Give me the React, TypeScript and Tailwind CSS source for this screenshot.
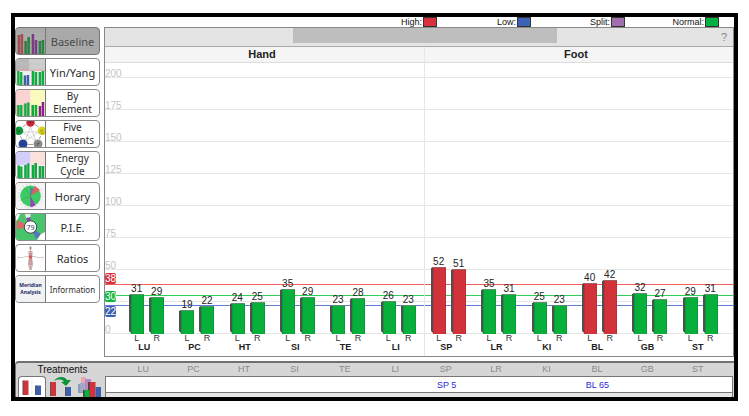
import type { ReactNode } from "react";

const GREEN = "#06b03a";
const RED = "#d2333b";
const BLUE = "#3c5fae";

const PX_PER_UNIT = 1.28;

const legend = [
  { label: "High:", swatch: "bg-[#d8303c]" },
  { label: "Low:", swatch: "bg-[#3d62b5]" },
  { label: "Split:", swatch: "bg-[#a070ae]" },
  { label: "Normal:", swatch: "bg-[#00b140]" },
];

const ticks = [175, 150, 125, 100, 75, 50, 25, 0];

const meridians = [
  { id: "LU", left: 31, right: 29, point: "" },
  { id: "PC", left: 19, right: 22, point: "" },
  { id: "HT", left: 24, right: 25, point: "" },
  { id: "SI", left: 35, right: 29, point: "" },
  { id: "TE", left: 23, right: 28, point: "" },
  { id: "LI", left: 26, right: 23, point: "" },
  { id: "SP", left: 52, right: 51, point: "SP 5" },
  { id: "LR", left: 35, right: 31, point: "" },
  { id: "KI", left: 25, right: 23, point: "" },
  { id: "BL", left: 40, right: 42, point: "BL 65" },
  { id: "GB", left: 32, right: 27, point: "" },
  { id: "ST", left: 29, right: 31, point: "" },
];

const thresholds = [
  { value: 38, line: "bg-[#f45c5c]", badge: "bg-[#d8303c] bottom-full" },
  { value: 30, line: "bg-[#2fd058]", badge: "bg-[#0cb83c] -top-1" },
  { value: 22, line: "bg-[#5f7cd8]", badge: "bg-[#3c5fb0] top-full" },
];

type MiniBar = [x: number, top: number, color: string];

function MiniChart({ bars, children }: { bars: MiniBar[]; children?: ReactNode }) {
  return (
    <svg viewBox="0 0 29 26" className="h-full w-full" preserveAspectRatio="none">
      {children}
      {bars.map(([x, top, color]) => (
        <g key={x}>
          <rect x={x - 0.5} y={top} width="0.8" height={26 - top} fill="#555" opacity="0.6" />
          <rect x={x} y={top} width="2.2" height={26 - top} fill={color} />
        </g>
      ))}
    </svg>
  );
}

function BaselineIcon() {
  return (
    <MiniChart
      bars={[
        [2, 7, "#a84a4e"], [5, 6, "#a84a4e"], [8.7, 13, "#25873f"], [11.7, 9, "#25873f"],
        [16, 6, "#7c3b88"], [19, 12, "#7c3b88"], [23, 13, "#25873f"], [26, 12, "#25873f"],
      ]}
    >
      <rect width="29" height="26" fill="#a9a9a9" />
      <path d="M0 6H29M0 10H29M0 18H29M0 22H29" stroke="#b8b8b8" strokeWidth="0.6" />
      <path d="M0 14H29" stroke="#b98d8d" strokeWidth="0.6" />
    </MiniChart>
  );
}

function YinYangIcon() {
  return (
    <MiniChart
      bars={[
        [1.3, 12, GREEN], [4.2, 13, GREEN], [8, 16.5, BLUE], [11, 16, BLUE],
        [16, 12, GREEN], [19, 13, GREEN], [23, 13, GREEN], [26, 12, GREEN],
      ]}
    >
      <rect width="13" height="12" fill="#b8b8b8" />
      <rect x="13" width="16" height="12" fill="#cdcdcd" />
      <rect y="12" width="29" height="14" fill="#f0f0f0" />
      <path d="M0 11H29" stroke="#e8a0a0" strokeWidth="0.8" />
      <path d="M0 5H29" stroke="#c4c4c4" strokeWidth="0.6" />
    </MiniChart>
  );
}

function ElementIcon() {
  return (
    <MiniChart
      bars={[
        [1.3, 15, GREEN], [4.2, 15, GREEN], [8.3, 13.5, GREEN], [11.3, 12.5, GREEN],
        [15.8, 15, GREEN], [19, 15, GREEN], [23, 16, "#8e1a9c"], [26, 12, "#8e1a9c"],
      ]}
    >
      <rect width="14.5" height="26" fill="#fbd3d3" />
      <rect x="14.5" width="14.5" height="26" fill="#fafabc" />
    </MiniChart>
  );
}

function EnergyIcon() {
  return (
    <MiniChart
      bars={[
        [1.8, 13.5, GREEN], [4.3, 14.5, GREEN], [8.5, 13, GREEN], [11.3, 11.5, GREEN],
        [16, 13, GREEN], [18.8, 11, GREEN], [23, 14, GREEN], [26, 14, GREEN],
      ]}
    >
      <rect width="14.5" height="13" fill="#d3cffa" />
      <rect x="14.5" width="14.5" height="13" fill="#fbe0dc" />
      <rect y="13" width="29" height="13" fill="#f4f4f4" />
    </MiniChart>
  );
}

function FiveElementsIcon() {
  return (
    <svg viewBox="0 0 29 26" className="h-full w-full">
      <g fill="none" stroke="#bdbdbd" strokeWidth="0.6">
        <path d="M14.5 6L9 20L23 11H6L20 20Z" />
        <path d="M10.5 3L6.5 6M18.5 3L22.5 6M4.5 15L5.5 18M24.5 15L23.5 18M12 23.5H17" stroke="#666" />
      </g>
      <circle cx="14.5" cy="1.6" r="4.2" fill="#cf2435" />
      <circle cx="3" cy="9.8" r="4.3" fill="#0d9a3a" />
      <circle cx="26" cy="9.8" r="4.3" fill="#d9d31c" />
      <circle cx="7" cy="23" r="4.5" fill="#27479c" />
      <circle cx="22" cy="23" r="4.5" fill="#8d8d8d" />
      <path d="M12 1H17M14.5 0V3M1 9L4 11M2 12L4 9M24 10L27 9M25 12H28M5 22L9 24M20 23L24 22M21 25L23 21" stroke="#222" strokeWidth="0.6" opacity="0.6" />
    </svg>
  );
}

function HoraryIcon() {
  return (
    <svg viewBox="0 0 29 26" className="h-full w-full">
      <rect width="29" height="26" fill="#f4f4f4" />
      <circle cx="14.5" cy="13" r="12" fill="none" stroke="#bbb" strokeWidth="0.8" strokeDasharray="1 3" />
      <circle cx="14.5" cy="13" r="10.4" fill="#3fca68" />
      <path d="M14.5 13V4.5L18.5 6Z" fill="#5a78c4" />
      <path d="M14.5 13L19 3L24 7Z" fill="#e0605f" />
      <path d="M14.5 13V24.5L19.5 22.5Z" fill="#a23cc0" />
      <path d="M14.5 3V23M9 4.5L14.5 13L5 17" stroke="#2a9a4a" strokeWidth="0.4" fill="none" />
    </svg>
  );
}

function PieIcon() {
  return (
    <svg viewBox="0 0 29 26" className="h-full w-full" preserveAspectRatio="xMidYMid slice">
      <rect width="29" height="26" fill="#48c46c" />
      <path d="M0 0H4L2 5L0 7Z" fill="#fff" />
      <path d="M14.5 13L1.5 6L0.5 15Z" fill="#e0656a" />
      <path d="M14.5 13L10 4L14.5 3Z" fill="#9a3bb5" />
      <path d="M10 4L9 0H14.5V3Z" fill="#e4f4e8" />
      <path d="M14.5 13L25 20L20 25Z" fill="#5874c0" />
      <path d="M25 20L29 18V26H21Z" fill="#fff" />
      <circle cx="14.5" cy="13" r="6.2" fill="#fff" stroke="#333" strokeWidth="0.9" />
      <text x="14.5" y="15.6" textAnchor="middle" fontSize="7" fill="#333a6a" fontFamily="Noto Sans, sans-serif">79</text>
    </svg>
  );
}

function RatiosIcon() {
  return (
    <svg viewBox="0 0 29 26" className="h-full w-full" fill="none">
      <path d="M2 12.5H7L10 11.5H19L22 12.5H27" stroke="#c9bbbb" strokeWidth="0.8" />
      <path d="M2 11V15M27 11V15" stroke="#ccc" strokeWidth="0.6" />
      <ellipse cx="14.5" cy="3" rx="1.2" ry="1.7" fill="#b9a3a0" />
      <path d="M12.8 6.5H16.2L15.8 14L16.6 19L15.3 24.5H13.7L12.4 19L13.2 14Z" fill="#e9d2ce" stroke="#a08a88" strokeWidth="0.6" />
      <path d="M14.5 2V24M13.5 8V20M15.5 8V20" stroke="#b06a68" strokeWidth="0.5" />
      <circle cx="14.5" cy="12" r="1.4" fill="#e04848" />
    </svg>
  );
}

function InformationIcon() {
  return (
    <span className="flex h-full flex-col justify-center bg-[#f1f2f4] text-center text-[5px] leading-[7px] font-bold text-[#1c2a66]">
      <span>Meridian</span>
      <span>Analysis</span>
    </span>
  );
}

const views = [
  { lines: ["Baseline"], icon: <BaselineIcon />, size: "text-[11px]", active: true },
  { lines: ["Yin/Yang"], icon: <YinYangIcon />, size: "text-[11px]" },
  { lines: ["By", "Element"], icon: <ElementIcon />, size: "text-[10px]" },
  { lines: ["Five", "Elements"], icon: <FiveElementsIcon />, size: "text-[10px]" },
  { lines: ["Energy", "Cycle"], icon: <EnergyIcon />, size: "text-[10px]" },
  { lines: ["Horary"], icon: <HoraryIcon />, size: "text-[11px]" },
  { lines: ["P.I.E."], icon: <PieIcon />, size: "text-[11px]" },
  { lines: ["Ratios"], icon: <RatiosIcon />, size: "text-[11px]" },
  { lines: ["Information"], icon: <InformationIcon />, size: "text-[8px]" },
];

function Sidebar() {
  return (
    <nav className="flex w-[85px] shrink-0 flex-col gap-[3px] font-['Noto_Sans',sans-serif]">
      {views.map((view) => (
        <button
          key={view.lines[0]}
          type="button"
          className={`flex h-7 overflow-hidden rounded border ${
            view.active ? "border-[#777] bg-[#a9a9a9] text-[#4a4a4a]" : "border-[#8a8a8a] bg-white text-[#2c2c2c]"
          }`}
        >
          <span className="block h-full w-[30px] shrink-0 border-r border-[#777]">{view.icon}</span>
          <span className={`flex h-full flex-1 flex-col items-center justify-center leading-[13px] ${view.size}`}>
            {view.lines.map((line) => (
              <span key={line}>{line}</span>
            ))}
          </span>
        </button>
      ))}
    </nav>
  );
}

function Bar({ value }: { value: number }) {
  const h = Math.round(value * PX_PER_UNIT);
  const high = value > 38;
  return (
    <div className="flex w-[15px] flex-col items-center">
      <span className="text-[10px] leading-[10px] text-[#222]">{value}</span>
      <svg width="15" height={h} className="block">
        <polygon points={`0,1 3,0 3,${h} 0,${h - 3}`} fill="#505050" />
        <rect x="2" width="13" height={h} fill={high ? "#c02c36" : "#089a34"} />
        <rect x="3" width="11" height={h} fill={high ? RED : GREEN} />
        <rect x="1" width="14" height="1" fill={high ? "#a06064" : "#5f8f6a"} />
      </svg>
    </div>
  );
}

function Plot() {
  return (
    <div className="relative">
      <div className="flex h-[15px] items-end border-b border-[#e6e6e6] text-[10px] leading-[6px] text-[#c4c4c4]">200</div>
      {ticks.map((tick) => (
        <div
          key={tick}
          className="flex h-8 items-end border-b border-[#e6e6e6] text-[10px] leading-[6px] text-[#c4c4c4]"
        >
          {tick}
        </div>
      ))}
      {thresholds.map((t) => (
        <div
          key={t.value}
          className={`absolute inset-x-0 h-px ${t.line}`}
          style={{ bottom: Math.round(t.value * PX_PER_UNIT) }}
        >
          <span
            className={`absolute left-0 h-[11px] w-[11px] rounded-xs text-center text-[10px] leading-[11px] text-white ${t.badge}`}
          >
            {t.value}
          </span>
        </div>
      ))}
      <div className="absolute inset-0 grid grid-cols-12 items-end pr-[10px] pl-[14px]">
        {meridians.map((m) => (
          <div key={m.id} className="flex items-end justify-center gap-[5px] pl-[5px]">
            <Bar value={m.left} />
            <Bar value={m.right} />
          </div>
        ))}
      </div>
    </div>
  );
}

function ChartPanel() {
  return (
    <main className="flex-1 border border-[#888] bg-white">
      <div className="relative flex h-[19px] items-center justify-end border-b border-[#aaa] bg-[#e4e4e4]">
        <div className="absolute top-0 left-[30%] h-[15px] w-[42%] bg-[#bebebe]" />
        <button type="button" aria-label="Help" className="px-1.5 text-[11px] leading-4 text-[#888]">
          ?
        </button>
      </div>
      <div className="relative">
        <div className="grid h-4 grid-cols-2 border-b border-[#ddd] bg-[#f5f5f5] text-center text-[11px] leading-[15px] font-bold text-[#222]">
          <h2>Hand</h2>
          <h2>Foot</h2>
        </div>
        <Plot />
        <div className="grid h-[22px] grid-cols-12 pr-[10px] pl-[14px] text-[9px] leading-[9px] text-[#333]">
          {meridians.map((m) => (
            <div key={m.id} className="text-center">
              <div className="flex justify-center gap-[5px] pl-[5px]">
                <span className="w-[15px]">L</span>
                <span className="w-[15px]">R</span>
              </div>
              <div className="font-bold text-[#222]">{m.id}</div>
            </div>
          ))}
        </div>
        <div className="absolute inset-y-0 left-[50.8%] w-px bg-[#e6e6e6]" />
      </div>
    </main>
  );
}

function TreatmentTabs() {
  return (
    <div className="w-[89px] shrink-0">
      <h2 className="pl-1 text-center text-[10px] leading-[13px] text-[#111]">Treatments</h2>
      <div className="flex gap-[3px] pl-0.5">
        <button
          type="button"
          aria-label="Treat high and low"
          className="h-[21px] w-7 overflow-hidden rounded-t border border-b-0 border-[#777] bg-white"
        >
          <svg viewBox="0 0 26 20" className="h-5 w-full">
            <path d="M13 2V18" stroke="#e2e2e2" strokeWidth="0.6" />
            <rect x="3.5" y="3.5" width="1.5" height="14.5" fill="#555" />
            <rect x="4.5" y="3.5" width="5" height="14.5" fill={RED} />
            <rect x="16" y="8.5" width="1.5" height="9.5" fill="#555" />
            <rect x="17" y="8.5" width="5" height="9.5" fill={BLUE} />
          </svg>
        </button>
        <button type="button" aria-label="Transfer" className="h-[21px] w-6">
          <svg viewBox="0 0 24 21" className="h-[21px] w-full">
            <rect x="1" y="6" width="1.5" height="14" fill="#555" />
            <rect x="2" y="6" width="5" height="14" fill={RED} />
            <rect x="16" y="11" width="1.5" height="9" fill="#555" />
            <rect x="17" y="11" width="5" height="9" fill={BLUE} />
            <path d="M5 5C8 0 16 0 18 4L22 4L17 10L12 6L15 5.5C13 3 9 3 5 5Z" fill="#0c9238" />
          </svg>
        </button>
        <button type="button" aria-label="All treatments" className="h-[21px] w-7">
          <svg viewBox="0 0 28 21" className="h-[21px] w-full">
            <rect x="5" y="1" width="5" height="9" fill="#e3aab0" />
            <rect x="9" y="3" width="6" height="12" fill="#b58ac4" />
            <rect x="2" y="8" width="7" height="9" fill="#8c9bb8" />
            <rect x="4" y="7" width="5" height="9" fill="#a3a9c4" />
            <rect x="12" y="6" width="2" height="15" fill="#444" />
            <rect x="13.5" y="6" width="6" height="15" fill={RED} />
            <rect x="8" y="14" width="5.5" height="7" fill={GREEN} />
            <rect x="7" y="14" width="1.5" height="7" fill="#444" />
            <rect x="19.5" y="11" width="5.5" height="10" fill={BLUE} />
          </svg>
        </button>
      </div>
    </div>
  );
}

function TreatmentsPanel() {
  return (
    <section className="mt-1 flex h-9 overflow-hidden rounded-tl border-t-2 border-l border-[#707070] bg-[#d6d6d6]">
      <TreatmentTabs />
      <table className="block flex-1 text-[9px]">
        <thead className="block">
          <tr className="grid h-[13px] grid-cols-12 pr-[11px] pl-[13px] leading-[13px] text-[#8a8a8a]">
            {meridians.map((m) => (
              <th key={m.id} scope="col" className="font-normal">
                {m.id}
              </th>
            ))}
          </tr>
        </thead>
        <tbody className="mr-px block h-[21px] border-x border-[#777] bg-[#e6e6e6]">
          <tr className="grid h-[17px] grid-cols-12 border-y border-[#777] bg-white pr-[9px] pl-[14px] leading-4 text-[#2a2ad8]">
            {meridians.map((m) => (
              <td key={m.id} className="text-center whitespace-nowrap">
                {m.point}
              </td>
            ))}
          </tr>
        </tbody>
      </table>
    </section>
  );
}

export default function App() {
  return (
    <div className="min-h-screen bg-white px-[11px] py-[13px] font-['Liberation_Sans',Arial,sans-serif]">
      <div className="border-4 border-black bg-white">
        <header className="flex h-[10px] justify-end pr-[15px] text-[9px] leading-[10px] text-[#111]">
          {legend.map((item) => (
            <div key={item.label} className="flex w-[94px] items-start justify-end gap-px">
              <span>{item.label}</span>
              <span className={`h-[10px] w-[14px] border border-[#333] ${item.swatch}`} />
            </div>
          ))}
        </header>
        <div className="flex items-start gap-1">
          <Sidebar />
          <ChartPanel />
        </div>
        <TreatmentsPanel />
      </div>
    </div>
  );
}
